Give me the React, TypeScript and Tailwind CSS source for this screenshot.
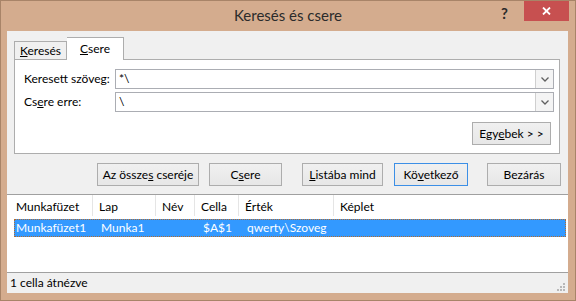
import React from 'react';

const ui = { fontFamily: 'Lato, "Noto Sans", sans-serif' };

const Btn = ({ w, children, def }: { w: string; children: React.ReactNode; def?: boolean }) => (
  <div
    className={`${w} shrink-0 h-[23px] flex items-center justify-center whitespace-nowrap border bg-gradient-to-b from-[#f0f0f0] to-[#e7e7e7] text-[12px] text-black ${
      def ? 'border-[#3c8fe6]' : 'border-[#adadad]'
    }`}
  >
    <span>{children}</span>
  </div>
);

const Combo = ({ value }: { value: string }) => (
  <div className="flex shrink-0 h-[20px] w-[439px] border border-[#abadb3] bg-white">
    <div className="flex-1 pl-[3px] text-[12px] leading-[18px] text-black">{value}</div>
    <div className="w-[18px] border-l border-[#cfcfcf] bg-[#f4f4f4] flex items-center justify-center">
      <svg width="8" height="5" viewBox="0 0 8 5">
        <path d="M0.5 0.5 L4 4 L7.5 0.5" fill="none" stroke="#606060" strokeWidth="1.3" />
      </svg>
    </div>
  </div>
);

const cols = [
  { w: 'w-[85px]', h: 'Munkafüzet', v: 'Munkafüzet1' },
  { w: 'w-[63px]', h: 'Lap', v: 'Munka1' },
  { w: 'w-[39px]', h: 'Név', v: '' },
  { w: 'w-[44px]', h: 'Cella', v: '$A$1' },
  { w: 'w-[95px]', h: 'Érték', v: 'qwerty\\Szoveg' },
  { w: 'flex-1', h: 'Képlet', v: '' },
];

export default function App() {
  return (
    <div className="w-[576px] h-[301px] bg-[#d4ac8e] border border-[#a88468] flex flex-col" style={ui}>
      {/* title bar */}
      <div className="h-[30px] shrink-0 grid grid-cols-[1fr_auto_1fr] items-start">
        <div />
        <div className="pt-[4px] text-[15px] leading-[20px] text-[#2b2b2b] whitespace-nowrap">Keresés és csere</div>
        <div className="flex justify-end items-start pr-[6px]">
          <div className="w-[14px] mt-[4px] mr-[9px] text-[15px] leading-[16px] font-bold text-[#2a2a2a]">?</div>
          <div className="w-[45px] h-[20px] bg-[#c75050] flex items-center justify-center">
            <svg width="9" height="8" viewBox="0 0 9 8">
              <path d="M1 0.5 L8 7.5 M8 0.5 L1 7.5" stroke="white" strokeWidth="1.8" />
            </svg>
          </div>
        </div>
      </div>

      {/* client */}
      <div className="flex-1 ml-[6px] mr-[7px] mb-[7px] bg-[#f0f0f0] flex flex-col">
        {/* tabs */}
        <div className="flex shrink-0 items-end pl-[7px] pt-[6px] h-[28px]">
          <div className="h-[18px] w-[53px] border border-b-0 border-[#adadad] bg-[#f0f0f0] text-[12px] leading-[17px] text-center whitespace-nowrap">
            <u>K</u>eresés
          </div>
          <div className="h-[23px] w-[57px] border border-b-0 border-l-0 border-[#adadad] bg-white text-[12px] leading-[22px] text-center relative top-[1px]">
            <u>C</u>sere
          </div>
        </div>

        {/* panel */}
        <div className="ml-[7px] mr-[8px] h-[95px] shrink-0 border border-[#adadad] bg-white pt-[9px] pl-[9px] flex flex-col">
          <div className="flex items-center">
            <div className="w-[91px] shrink-0 text-[12px] whitespace-nowrap">Keresett szöve<u>g</u>:</div>
            <Combo value="*\" />
          </div>
          <div className="flex items-center mt-[3px]">
            <div className="w-[91px] shrink-0 text-[12px] whitespace-nowrap">Cs<u>e</u>re erre:</div>
            <Combo value="\" />
          </div>
          <div className="flex justify-end mt-[10px] pr-[8px]">
            <Btn w="w-[79px]">
              Egy<u>e</u>bek &gt; &gt;
            </Btn>
          </div>
        </div>

        {/* buttons */}
        <div className="flex shrink-0 mt-[9px] pl-[90px]">
          <Btn w="w-[102px]">Az össze<u>s</u> cseréje</Btn>
          <div className="w-[10px] shrink-0" />
          <Btn w="w-[73px]">C<u>s</u>ere</Btn>
          <div className="w-[20px] shrink-0" />
          <Btn w="w-[81px]"><u>L</u>istába mind</Btn>
          <div className="w-[11px] shrink-0" />
          <Btn w="w-[74px]" def>Kö<u>v</u>etkező</Btn>
          <div className="w-[19px] shrink-0" />
          <Btn w="w-[74px]">Bezárás</Btn>
        </div>

        {/* result list */}
        <div className="mt-[8px] flex-1 bg-white border-t border-[#a0a0a0] flex flex-col pl-[1px]">
          <div className="h-[21px] flex">
            {cols.map((c, i) => (
              <div
                key={c.h}
                className={`${c.w} shrink-0 ${i === 0 ? 'pl-[8px]' : 'pl-[6px]'} ${i < cols.length - 1 ? 'border-r border-[#e5e5e5]' : ''} text-[12px] leading-[24px] text-black whitespace-nowrap`}
              >
                {c.h}
              </div>
            ))}
            <div className="w-[2px]" />
          </div>
          <div className="mt-[3px] ml-[6px] mr-[2px] h-[18px] bg-[#3399ff] border border-dotted border-[#b36b2e] flex text-white text-[12px] leading-[16px] whitespace-nowrap">
            {cols.map((c, i) => (
              <div key={c.h} className={`shrink-0 ${i === 0 ? 'w-[79px] pl-[1px]' : `${c.w} pl-[7px]`}`}>
                {c.v}
              </div>
            ))}
          </div>
          <div className="flex-1" />
        </div>

        {/* status bar */}
        <div className="h-[21px] shrink-0 border-t border-[#a0a0a0] flex items-center justify-between pl-[3px] pr-[2px]">
          <div className="text-[12px] text-black">1 cella átnézve</div>
          <svg width="10" height="10" viewBox="0 0 10 10" className="self-end mb-[1px]">
            <rect x="7" y="1" width="2" height="2" fill="#b8b8b8" />
            <rect x="4" y="4" width="2" height="2" fill="#b8b8b8" />
            <rect x="7" y="4" width="2" height="2" fill="#b8b8b8" />
            <rect x="1" y="7" width="2" height="2" fill="#b8b8b8" />
            <rect x="4" y="7" width="2" height="2" fill="#b8b8b8" />
            <rect x="7" y="7" width="2" height="2" fill="#b8b8b8" />
          </svg>
        </div>
      </div>
    </div>
  );
}
